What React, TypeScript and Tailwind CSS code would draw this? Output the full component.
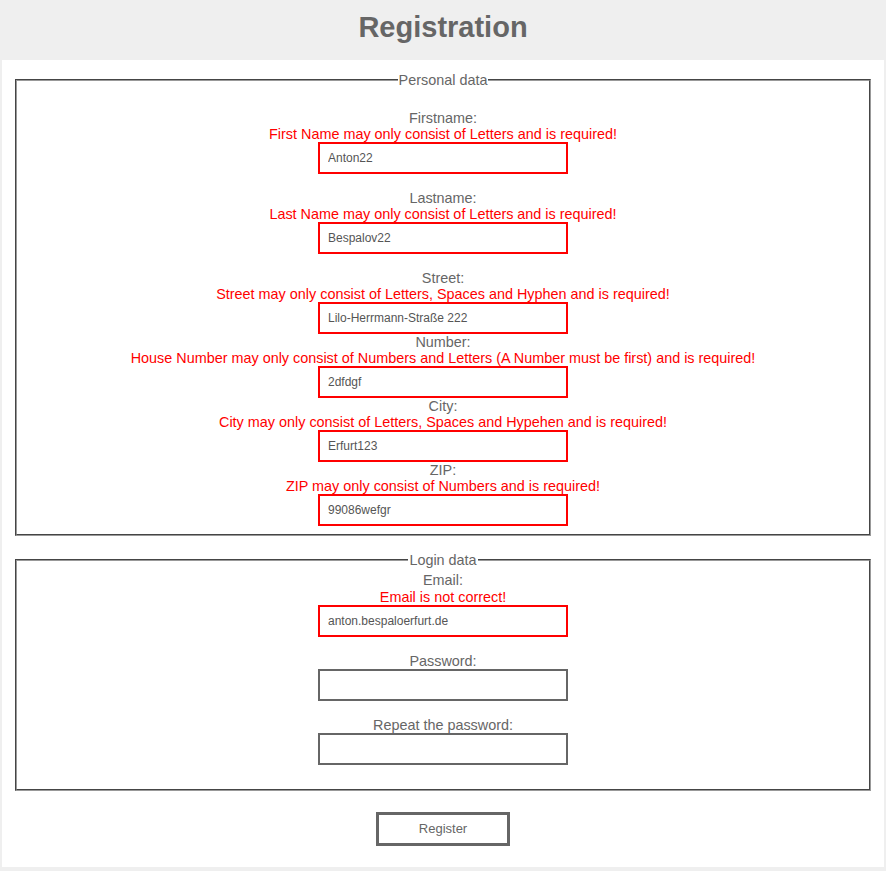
import React from 'react';

type Field = {
  label: string;
  error?: string;
  value?: string;
  gapBefore?: boolean;
};

const personal: Field[] = [
  { label: 'Firstname:', error: 'First Name may only consist of Letters and is required!', value: 'Anton22' },
  { label: 'Lastname:', error: 'Last Name may only consist of Letters and is required!', value: 'Bespalov22', gapBefore: true },
  { label: 'Street:', error: 'Street may only consist of Letters, Spaces and Hyphen and is required!', value: 'Lilo-Herrmann-Straße 222', gapBefore: true },
  { label: 'Number:', error: 'House Number may only consist of Numbers and Letters (A Number must be first) and is required!', value: '2dfdgf' },
  { label: 'City:', error: 'City may only consist of Letters, Spaces and Hypehen and is required!', value: 'Erfurt123' },
  { label: 'ZIP:', error: 'ZIP may only consist of Numbers and is required!', value: '99086wefgr' },
];

function FormRow({ field }: { field: Field }) {
  return (
    <div className={`flex flex-col items-center ${field.gapBefore ? 'mt-4' : ''}`}>
      <label className="leading-4">{field.label}</label>
      {field.error && <div className="leading-4 text-[#ff0000]">{field.error}</div>}
      <input
        readOnly
        value={field.value ?? ''}
        className={`h-8 w-[250px] border-2 bg-white px-2 text-[12px] text-[#555] outline-none ${
          field.error ? 'border-[#ff0000]' : 'border-[#666]'
        }`}
      />
    </div>
  );
}

export default function App() {
  return (
    <div className="min-h-screen bg-[#efefef] font-['Liberation_Sans',Arial,sans-serif] text-[14.4px] text-[#666]">
      <header className="flex h-[60px] items-center justify-center pb-[5px]">
        <h1 className="text-[29px] font-bold text-[#666]">Registration</h1>
      </header>

      <main className="mx-[2px] bg-white px-[13px] pb-[21px] pt-3">
        <fieldset className="border-2 border-[#999] px-3 pb-[8px] [border-style:groove]">
          <legend className="mx-auto px-px leading-4">Personal data</legend>
          <div className="mt-[22px] flex flex-col">
            {personal.map((f) => (
              <FormRow key={f.label} field={f} />
            ))}
          </div>
        </fieldset>

        <fieldset className="mt-4 border-2 border-[#999] px-3 pb-[24px] [border-style:groove]">
          <legend className="mx-auto px-px leading-4">Login data</legend>
          <div className="mt-1 flex flex-col items-center">
            <label className="leading-4">Email:</label>
            <div className="mt-px leading-4 text-[#ff0000]">Email is not correct!</div>
            <input
              readOnly
              value="anton.bespaloerfurt.de"
              className="h-8 w-[250px] border-2 border-[#ff0000] bg-white px-2 text-[12px] text-[#555] outline-none"
            />
            <label className="mt-4 leading-4">Password:</label>
            <input type="password" readOnly className="h-8 w-[250px] border-2 border-[#666] bg-white outline-none" />
            <label className="mt-4 leading-4">Repeat the password:</label>
            <input type="password" readOnly className="h-8 w-[250px] border-2 border-[#666] bg-white outline-none" />
          </div>
        </fieldset>

        <div className="mt-[21px] flex justify-center">
          <button className="h-[34px] w-[134px] border-[3px] border-[#666] bg-white text-[13px] text-[#666]">
            Register
          </button>
        </div>
      </main>
    </div>
  );
}
